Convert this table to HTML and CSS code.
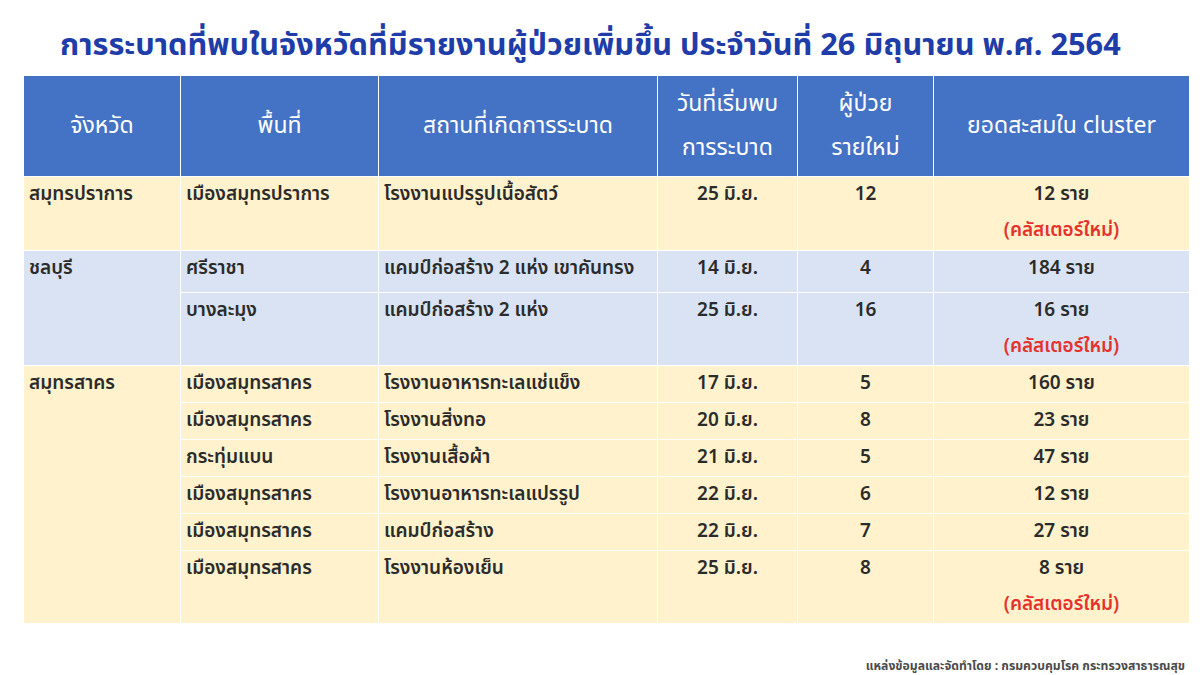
FILE: index.html
```html
<!DOCTYPE html>
<html lang="th">
<head>
<meta charset="utf-8">
<title>การระบาด</title>
<link rel="stylesheet" href="styles.css">
</head>
<body>
<div class="page">
  <h1 class="title">การระบาดที่พบในจังหวัดที่มีรายงานผู้ป่วยเพิ่มขึ้น ประจำวันที่ 26 มิถุนายน พ.ศ. 2564</h1>
  <table class="grid">
    <colgroup>
      <col class="c1"><col class="c2"><col class="c3"><col class="c4"><col class="c5"><col class="c6">
    </colgroup>
    <thead>
      <tr class="hrow">
        <th>จังหวัด</th>
        <th>พื้นที่</th>
        <th>สถานที่เกิดการระบาด</th>
        <th>วันที่เริ่มพบ<br>การระบาด</th>
        <th>ผู้ป่วย<br>รายใหม่</th>
        <th>ยอดสะสมใน cluster</th>
      </tr>
    </thead>
    <tbody>
      <tr class="y r74">
        <td>สมุทรปราการ</td>
        <td>เมืองสมุทรปราการ</td>
        <td>โรงงานแปรรูปเนื้อสัตว์</td>
        <td class="ctr">25 มิ.ย.</td>
        <td class="ctr">12</td>
        <td class="ctr">12 ราย<br><span class="new">(คลัสเตอร์ใหม่)</span></td>
      </tr>
      <tr class="b r42">
        <td rowspan="2">ชลบุรี</td>
        <td>ศรีราชา</td>
        <td>แคมป์ก่อสร้าง 2 แห่ง เขาคันทรง</td>
        <td class="ctr">14 มิ.ย.</td>
        <td class="ctr">4</td>
        <td class="ctr">184 ราย</td>
      </tr>
      <tr class="b r73">
        <td>บางละมุง</td>
        <td>แคมป์ก่อสร้าง 2 แห่ง</td>
        <td class="ctr">25 มิ.ย.</td>
        <td class="ctr">16</td>
        <td class="ctr">16 ราย<br><span class="new">(คลัสเตอร์ใหม่)</span></td>
      </tr>
      <tr class="y r36">
        <td rowspan="6">สมุทรสาคร</td>
        <td>เมืองสมุทรสาคร</td>
        <td>โรงงานอาหารทะเลแช่แข็ง</td>
        <td class="ctr">17 มิ.ย.</td>
        <td class="ctr">5</td>
        <td class="ctr">160 ราย</td>
      </tr>
      <tr class="y r36">
        <td>เมืองสมุทรสาคร</td>
        <td>โรงงานสิ่งทอ</td>
        <td class="ctr">20 มิ.ย.</td>
        <td class="ctr">8</td>
        <td class="ctr">23 ราย</td>
      </tr>
      <tr class="y r36">
        <td>กระทุ่มแบน</td>
        <td>โรงงานเสื้อผ้า</td>
        <td class="ctr">21 มิ.ย.</td>
        <td class="ctr">5</td>
        <td class="ctr">47 ราย</td>
      </tr>
      <tr class="y r36">
        <td>เมืองสมุทรสาคร</td>
        <td>โรงงานอาหารทะเลแปรรูป</td>
        <td class="ctr">22 มิ.ย.</td>
        <td class="ctr">6</td>
        <td class="ctr">12 ราย</td>
      </tr>
      <tr class="y r36">
        <td>เมืองสมุทรสาคร</td>
        <td>แคมป์ก่อสร้าง</td>
        <td class="ctr">22 มิ.ย.</td>
        <td class="ctr">7</td>
        <td class="ctr">27 ราย</td>
      </tr>
      <tr class="y r72">
        <td>เมืองสมุทรสาคร</td>
        <td>โรงงานห้องเย็น</td>
        <td class="ctr">25 มิ.ย.</td>
        <td class="ctr">8</td>
        <td class="ctr">8 ราย<br><span class="new">(คลัสเตอร์ใหม่)</span></td>
      </tr>
    </tbody>
  </table>
  <div class="source">แหล่งข้อมูลและจัดทำโดย : กรมควบคุมโรค กระทรวงสาธารณสุข</div>
</div>
</body>
</html>
```
FILE: styles.css
```css
html, body {
  margin: 0;
  padding: 0;
  background: #ffffff;
}
body {
  font-family: "Noto Sans Thai", "Noto Sans", "DejaVu Sans", sans-serif;
  width: 1200px;
  height: 675px;
  overflow: hidden;
}
.page {
  padding: 26px 0 0 23px;
}
.title {
  margin: 0 0 0 37px;
  height: 50px;
  font-size: 30.7px;
  line-height: 40px;
  font-weight: 700;
  color: #1f3da8;
  white-space: nowrap;
}
.grid {
  border-collapse: collapse;
  table-layout: fixed;
  width: 1166px;
}
.c1 { width: 157px; }
.c2 { width: 198px; }
.c3 { width: 279px; }
.c4 { width: 140px; }
.c5 { width: 136px; }
.c6 { width: 256px; }
.grid th, .grid td {
  border: 1px solid #ffffff;
  padding: 0;
  overflow: hidden;
  white-space: nowrap;
}
.hrow {
  height: 100px;
}
.grid th {
  background: #4472c4;
  color: #ffffff;
  font-weight: 400;
  font-size: 23px;
  line-height: 44px;
  vertical-align: middle;
  text-align: center;
  border-top: none;
}
.grid td {
  vertical-align: top;
  font-size: 19px;
  font-weight: 600;
  color: #2b2b2b;
  line-height: 36px;
  padding-left: 5px;
}
.grid td.ctr {
  text-align: center;
  padding-left: 0;
}
.grid tr.y td { background: #fff2cc; }
.grid tr.b td { background: #dae3f3; }
.r74 { height: 74px; }
.r42 { height: 42px; }
.r73 { height: 73px; }
.r36 { height: 36px; }
.r72 { height: 72px; }
.new {
  color: #e5322d;
}
.source {
  margin: 33px 15px 0 0;
  text-align: right;
  font-size: 12.2px;
  font-weight: 700;
  color: #4a4a4a;
}
```
